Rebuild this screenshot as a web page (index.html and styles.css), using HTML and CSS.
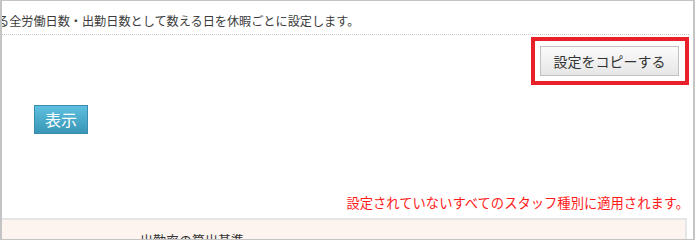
FILE: index.html
```html
<!DOCTYPE html>
<html lang="ja">
<head>
<meta charset="utf-8">
<link rel="stylesheet" href="styles.css">
</head>
<body>
<div class="frame">
  <div class="content">
    <p class="lead">る全労働日数・出勤日数として数える日を休暇ごとに設定します。</p>
    <div class="copy-row">
      <div class="highlight">
        <button class="btn-copy" type="button">設定をコピーする</button>
      </div>
    </div>
    <div class="show-row">
      <button class="btn-show" type="button">表示</button>
    </div>
    <p class="notice">設定されていないすべてのスタッフ種別に適用されます。</p>
    <div class="section">
      <div class="section-title">出勤率の算出基準</div>
    </div>
  </div>
</div>
</body>
</html>
```

FILE: styles.css
```css
html, body {
  margin: 0;
  padding: 0;
  background: #ffffff;
}
body {
  font-family: "Noto Sans CJK JP", "Noto Sans", sans-serif;
  color: #333333;
  width: 695px;
  height: 240px;
  overflow: hidden;
}
.frame {
  box-sizing: border-box;
  width: 695px;
  height: 240px;
  border-top: 1px solid #c4c4c4;
  border-left: 2px solid #c4c4c4;
  border-right: 2px solid #c4c4c4;
  border-bottom: 1px solid #c4c4c4;
  overflow: hidden;
}
.content {
  padding-right: 4px;
}
.lead {
  margin: 0 0 0 -5px;
  padding-top: 10px;
  font-size: 12.15px;
  line-height: 20px;
  height: 23px;
  color: #3c3c3c;
  white-space: nowrap;
  border-bottom: 1px dotted #c8c8c8;
}
.copy-row {
  display: flex;
  justify-content: flex-end;
  padding-top: 2px;
}
.highlight {
  border: 4px solid #e8202a;
  padding: 5px 6px 5px 5px;
}
.btn-copy {
  display: block;
  box-sizing: border-box;
  width: 139px;
  height: 30px;
  border: 1px solid #c2c2c2;
  background: linear-gradient(#fbfbfb, #e6e6e6);
  font-family: "Noto Sans CJK JP", sans-serif;
  font-size: 14px;
  color: #333333;
  padding: 0;
  line-height: 26px;
}
.show-row {
  padding-top: 20px;
  padding-left: 32px;
}
.btn-show {
  display: block;
  box-sizing: border-box;
  width: 54px;
  height: 29px;
  border: 1px solid #3a8db0;
  background: linear-gradient(#5ec0de, #3996b6);
  color: #ffffff;
  font-family: "Noto Sans CJK JP", sans-serif;
  font-size: 16px;
  line-height: 25px;
  padding: 0;
}
.notice {
  margin: 0;
  padding-top: 59px;
  padding-right: 0;
  text-align: right;
  font-size: 13.3px;
  line-height: 20px;
  color: #ff1a1a;
}
.section {
  margin-top: 5px;
  margin-right: 2px;
  border-top: 2px solid #e6e6e6;
  border-right: 2px solid #e6e6e6;
  background: #fdf4ef;
  height: 40px;
}
.section-title {
  padding-left: 138px;
  padding-top: 10px;
  font-size: 13px;
  line-height: 20px;
  color: #333333;
}
```
